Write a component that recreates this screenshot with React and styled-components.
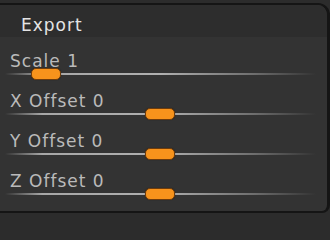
import React from "react";
import styled, { createGlobalStyle } from "styled-components";

const GlobalStyle = createGlobalStyle`
  html, body {
    margin: 0;
    padding: 0;
    background: #2c2c2c;
    overflow: hidden;
  }
  body {
    font-family: "DejaVu Sans", "Liberation Sans", sans-serif;
  }
`;

const Frame = styled.div`
  width: 330px;
  height: 213px;
  padding-top: 3px;
  box-sizing: border-box;
  overflow: hidden;
`;

const Panel = styled.div`
  margin-left: -10px;
  width: 340px;
  height: 210px;
  box-sizing: border-box;
  background: #333333;
  border-top: 2px solid #151515;
  border-right: 3px solid #151515;
  border-bottom: 2px solid #151515;
  border-top-right-radius: 12px;
  border-bottom-right-radius: 8px;
  overflow: hidden;
  display: flex;
  flex-direction: column;
`;

const Header = styled.div`
  height: 32px;
  box-sizing: border-box;
  padding: 11px 0 0 31px;
  background: #2d2d2d;
  color: #e4e4e4;
  font-size: 17px;
  line-height: 18px;
  letter-spacing: 1px;
`;

const Body = styled.div`
  display: flex;
  flex-direction: column;
  padding-left: 10px;
`;

const Row = styled.div`
  height: 40px;
  display: flex;
  flex-direction: column;
`;

const Label = styled.div`
  height: 33px;
  box-sizing: border-box;
  padding: 15px 0 0 10px;
  color: #bababa;
  font-size: 17px;
  line-height: 18px;
  letter-spacing: 1px;
  white-space: nowrap;
`;

const TrackWrap = styled.div`
  position: relative;
  height: 10px;
  margin-left: 5px;
  width: 311px;
  display: flex;
  align-items: center;
`;

const Track = styled.div`
  width: 100%;
  height: 2px;
  background: linear-gradient(
    to right,
    rgba(180, 180, 180, 0) 0%,
    rgba(180, 180, 180, 0.9) 12%,
    #b0b0b0 50%,
    rgba(150, 150, 150, 0.6) 80%,
    rgba(120, 120, 120, 0) 100%
  );
`;

const Knob = styled.div`
  position: absolute;
  top: 50%;
  width: 30px;
  height: 12px;
  margin-top: -6px;
  box-sizing: border-box;
  background: #f7931c;
  border: 1px solid #6e3c0c;
  border-radius: 5px;
  box-shadow: 0 0 1px rgba(0, 0, 0, 0.6);
`;

const sliders = [
  { name: "Scale", value: 1, pos: 26 },
  { name: "X Offset", value: 0, pos: 140 },
  { name: "Y Offset", value: 0, pos: 140 },
  { name: "Z Offset", value: 0, pos: 140 },
];

export default function App() {
  return (
    <>
      <GlobalStyle />
      <Frame>
        <Panel>
          <Header>Export</Header>
          <Body>
            {sliders.map(({ name, value, pos }) => (
              <Row key={name}>
                <Label>
                  {name} {value}
                </Label>
                <TrackWrap>
                  <Track />
                  <Knob style={{ left: pos }} />
                </TrackWrap>
              </Row>
            ))}
          </Body>
        </Panel>
      </Frame>
    </>
  );
}
